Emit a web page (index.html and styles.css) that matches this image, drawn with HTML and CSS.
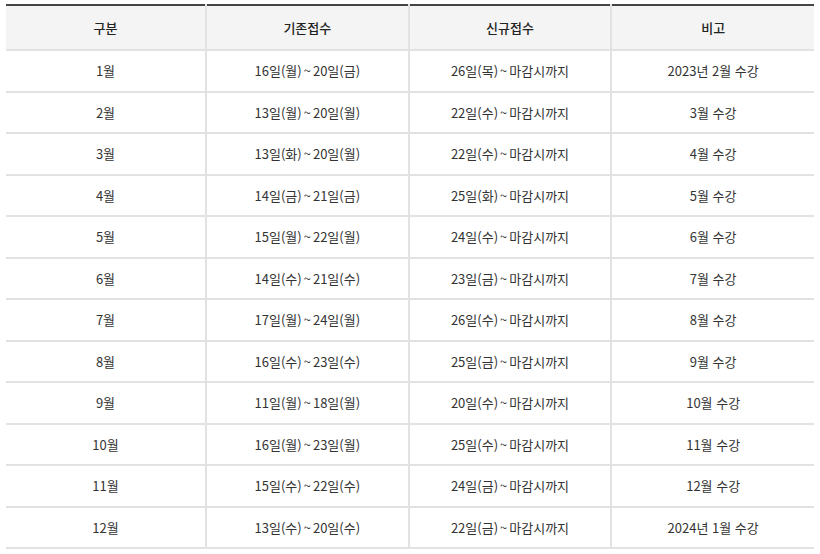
FILE: index.html
```html
<!DOCTYPE html>
<html lang="ko">
<head>
<meta charset="utf-8">
<link rel="stylesheet" href="styles.css">
</head>
<body>
<div class="wrap">
<table class="sched">
<thead>
<tr><th>구분</th><th>기존접수</th><th>신규접수</th><th>비고</th></tr>
</thead>
<tbody>
<tr><td>1월</td><td>16일(월)<span class="t">~</span>20일(금)</td><td>26일(목)<span class="t">~</span>마감시까지</td><td>2023년 2월 수강</td></tr>
<tr><td>2월</td><td>13일(월)<span class="t">~</span>20일(월)</td><td>22일(수)<span class="t">~</span>마감시까지</td><td>3월 수강</td></tr>
<tr><td>3월</td><td>13일(화)<span class="t">~</span>20일(월)</td><td>22일(수)<span class="t">~</span>마감시까지</td><td>4월 수강</td></tr>
<tr><td>4월</td><td>14일(금)<span class="t">~</span>21일(금)</td><td>25일(화)<span class="t">~</span>마감시까지</td><td>5월 수강</td></tr>
<tr><td>5월</td><td>15일(월)<span class="t">~</span>22일(월)</td><td>24일(수)<span class="t">~</span>마감시까지</td><td>6월 수강</td></tr>
<tr><td>6월</td><td>14일(수)<span class="t">~</span>21일(수)</td><td>23일(금)<span class="t">~</span>마감시까지</td><td>7월 수강</td></tr>
<tr><td>7월</td><td>17일(월)<span class="t">~</span>24일(월)</td><td>26일(수)<span class="t">~</span>마감시까지</td><td>8월 수강</td></tr>
<tr><td>8월</td><td>16일(수)<span class="t">~</span>23일(수)</td><td>25일(금)<span class="t">~</span>마감시까지</td><td>9월 수강</td></tr>
<tr><td>9월</td><td>11일(월)<span class="t">~</span>18일(월)</td><td>20일(수)<span class="t">~</span>마감시까지</td><td>10월 수강</td></tr>
<tr><td>10월</td><td>16일(월)<span class="t">~</span>23일(월)</td><td>25일(수)<span class="t">~</span>마감시까지</td><td>11월 수강</td></tr>
<tr><td>11월</td><td>15일(수)<span class="t">~</span>22일(수)</td><td>24일(금)<span class="t">~</span>마감시까지</td><td>12월 수강</td></tr>
<tr><td>12월</td><td>13일(수)<span class="t">~</span>20일(수)</td><td>22일(금)<span class="t">~</span>마감시까지</td><td>2024년 1월 수강</td></tr>
</tbody>
</table>
</div>
</body>
</html>
```
FILE: styles.css
```css
html, body {
  margin: 0;
  padding: 0;
  background: #fff;
}
.wrap {
  padding: 4px 6px 0 6px;
}
.sched {
  width: 808px;
  border-collapse: collapse;
  table-layout: fixed;
  border-top: 2px solid #444;
  font-family: "Noto Sans CJK KR", "Noto Sans", sans-serif;
  font-size: 13px;
  color: #333;
}
.sched th,
.sched td {
  text-align: center;
  padding: 0;
  border-bottom: 2px solid #e2e2e2;
  border-left: 2px solid #e2e2e2;
  box-sizing: border-box;
}
.sched th:first-child,
.sched td:first-child {
  border-left: none;
  width: 200px;
}
.sched th {
  height: 45px;
  background: #f4f4f4;
  font-weight: 500;
  color: #222;
}
.sched td {
  height: 41.5px;
}
.t {
  margin: 0 2px;
}
```
